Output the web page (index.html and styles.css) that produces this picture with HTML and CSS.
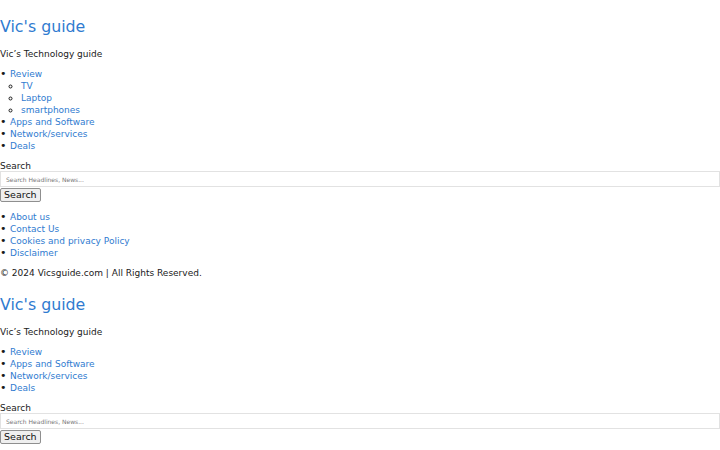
FILE: index.html
```html
<!DOCTYPE html>
<html lang="en">
<head>
    <meta charset="UTF-8">
    <meta name="viewport" content="width=device-width, initial-scale=1.0">
    <title>Vic's guide</title>
    <link rel="stylesheet" href="styles.css">
</head>
<body>
    <header class="site-header">
        <h1 class="site-title"><a href="#">Vic's guide</a></h1>
        <p class="tagline">Vic’s Technology guide</p>
        <ul class="menu">
            <li><a href="#">Review</a>
                <ul class="sub-menu">
                    <li><a href="#">TV</a></li>
                    <li><a href="#">Laptop</a></li>
                    <li><a href="#">smartphones</a></li>
                </ul>
            </li>
            <li><a href="#">Apps and Software</a></li>
            <li><a href="#">Network/services</a></li>
            <li><a href="#">Deals</a></li>
        </ul>
    </header>

    <form class="search-form">
        <label for="s1">Search</label>
        <input type="text" id="s1" placeholder="Search Headlines, News...">
        <button type="button">Search</button>
    </form>

    <footer class="site-footer">
        <ul class="menu">
            <li><a href="#">About us</a></li>
            <li><a href="#">Contact Us</a></li>
            <li><a href="#">Cookies and privacy Policy</a></li>
            <li><a href="#">Disclaimer</a></li>
        </ul>
        <p class="copyright">© 2024 Vicsguide.com | All Rights Reserved.</p>
    </footer>

    <!-- mobile header -->
    <header class="site-header">
        <h1 class="site-title"><a href="#">Vic's guide</a></h1>
        <p class="tagline">Vic’s Technology guide</p>
        <ul class="menu">
            <li><a href="#">Review</a></li>
            <li><a href="#">Apps and Software</a></li>
            <li><a href="#">Network/services</a></li>
            <li><a href="#">Deals</a></li>
        </ul>
    </header>

    <form class="search-form">
        <label for="s2">Search</label>
        <input type="text" id="s2" placeholder="Search Headlines, News...">
        <button type="button">Search</button>
    </form>
</body>
</html>
```

FILE: styles.css
```css
* {
    box-sizing: border-box;
}

body {
    margin: 0;
    padding-top: 1px;
    background: #fff;
    color: #1a1a1a;
    font-family: "DejaVu Sans", sans-serif;
    font-size: 9px;
    line-height: 12px;
}

a {
    color: #2f7bd0;
    text-decoration: none;
}

.site-title {
    margin: 16px 0 11px;
    font-size: 15.8px;
    font-weight: normal;
    line-height: 20px;
}

.tagline {
    margin: 0 0 8px;
}

.menu {
    margin: 0 0 8px;
    padding-left: 10px;
}

.menu > li::marker {
    content: "• ";
    font-size: 11px;
    color: #1a1a1a;
}

.sub-menu {
    margin: 0;
    padding-left: 11px;
    list-style: circle;
}

.search-form {
    display: flex;
    flex-direction: column;
    align-items: flex-start;
    margin-bottom: 8px;
}

.search-form label {
    margin-bottom: -1px;
}

.search-form input {
    width: 100%;
    height: 16px;
    margin: 0 0 1px;
    padding: 0 5px;
    border: 1px solid #e2e2e2;
    font-family: "DejaVu Sans", sans-serif;
    font-size: 6px;
    color: #333;
}

.search-form input::placeholder {
    color: #777;
}

.search-form button {
    height: 14px;
    margin-bottom: 1px;
    padding: 0 3px;
    background: #efefef;
    border: 1px solid #8f8f8f;
    border-radius: 2px;
    color: #111;
    font-family: "DejaVu Sans", sans-serif;
    font-size: 9.5px;
    line-height: 12px;
}

.copyright {
    margin: 0 0 16px;
}
```
